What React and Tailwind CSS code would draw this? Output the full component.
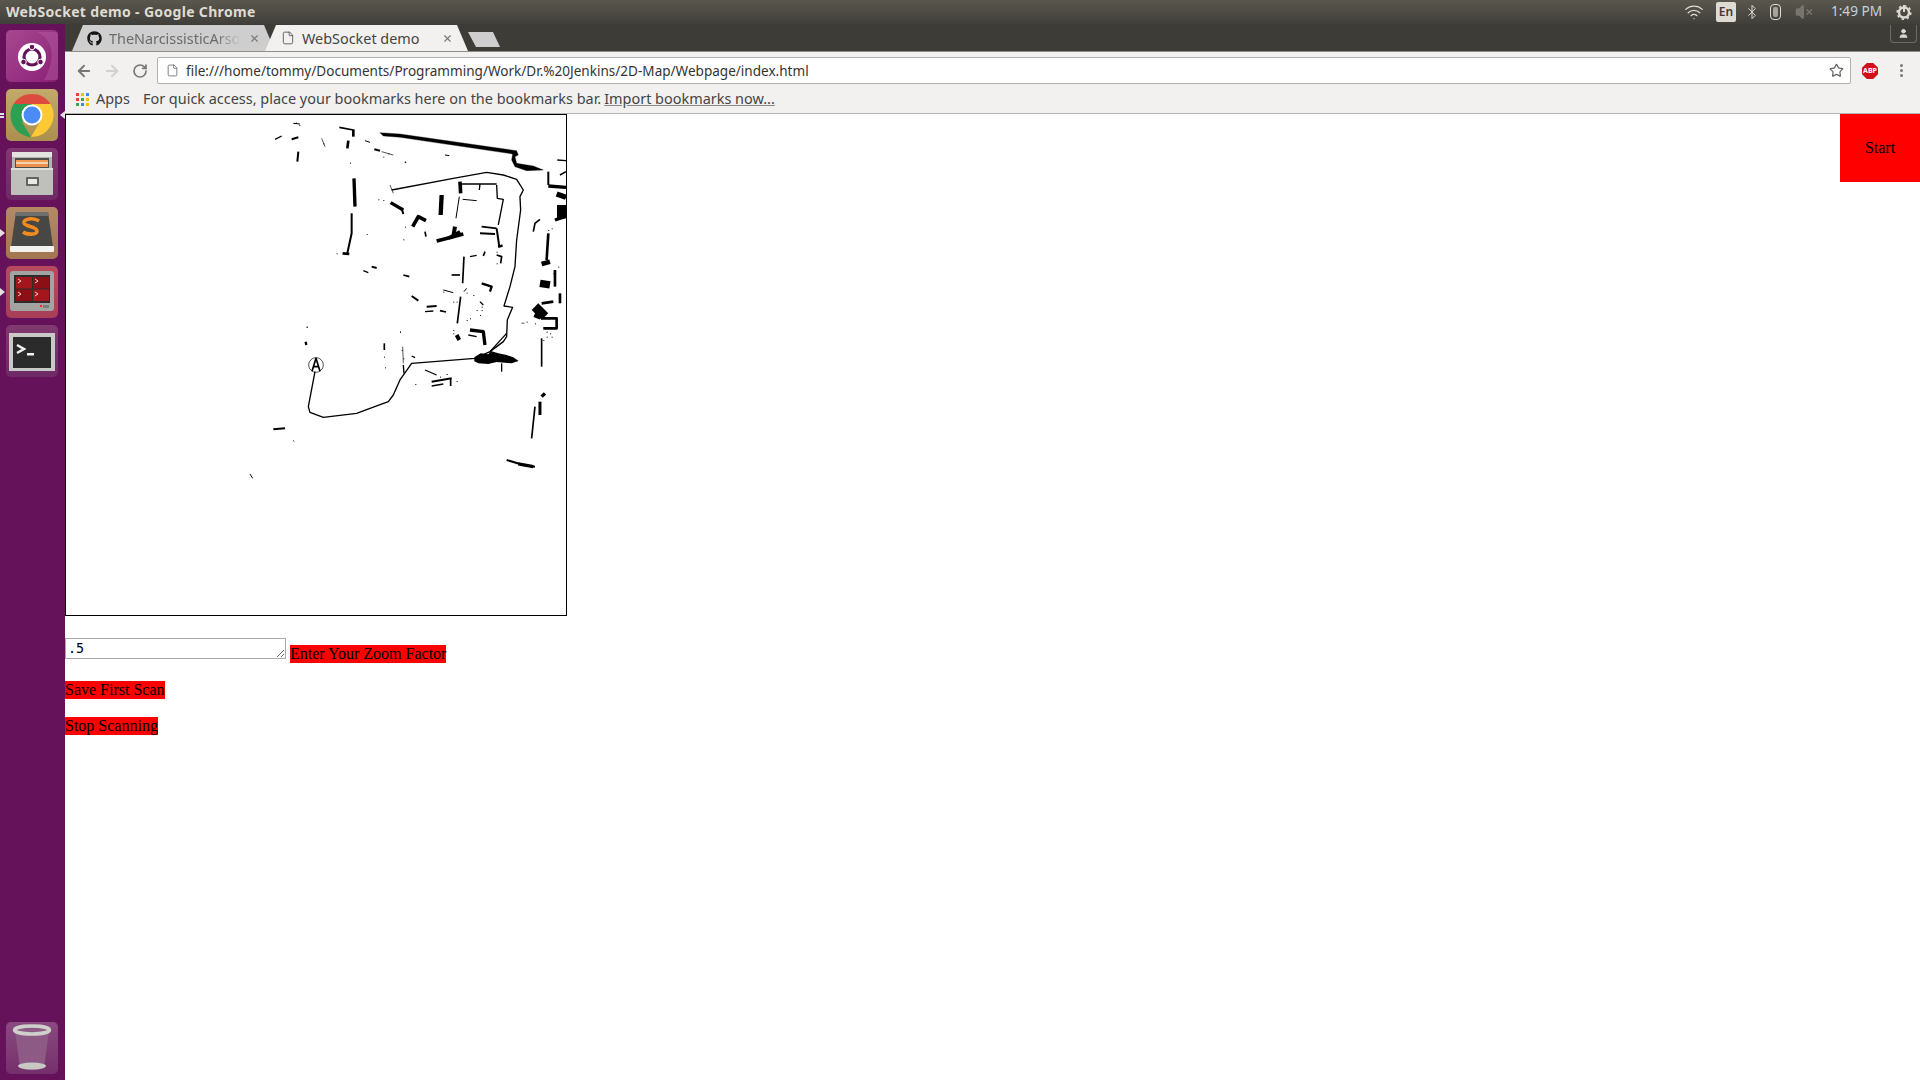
import { ArrowLeft, ArrowRight, Bluetooth, File, RotateCw, Star, User, VolumeX, Wifi, X } from 'lucide-react'
import { FaGithub } from 'react-icons/fa'

// strokes read off the map, in 3x crop coordinates: [path, width]
const upperMap = [
    ['M105,88 L125,78', 4], ['M155,88 L175,82', 6], ['M160,40 L180,42', 3], ['M175,125 L172,155', 6],
    ['M245,85 L255,110', 2], ['M298,52 L340,60', 5], ['M340,58 L340,80', 8], ['M325,92 L322,115', 8],
    ['M375,92 L390,97', 3], ['M403,118 L420,122', 6], ['M425,125 L460,135', 2], ['M495,155 L498,158', 4],
    ['M615,135 L628,137', 3], ['M952,150 L978,152', 4], ['M925,185 L925,225', 6], ['M925,228 L978,232', 10],
    ['M960,195 L978,185', 5], ['M950,252 L978,262', 16], ['M965,285 L965,325', 28], ['M945,330 L975,320', 10],
    ['M342,205 L345,290', 10], ['M335,310 L335,370 L322,430', 6], ['M308,430 L328,432', 8],
    ['M452,278 L490,300', 10], ['M485,295 L490,312', 6], ['M518,350 L535,320 L558,332', 11], ['M605,255 L602,315', 13],
    ['M660,215 L662,250', 11], ['M665,222 L770,222', 4], ['M720,222 L718,240', 4],
    ['M770,225 L772,265 L790,268 L775,345', 4], ['M658,260 L648,325', 3], ['M668,268 L710,272', 3],
    ['M725,350 L770,355', 5], ['M720,370 L765,372', 6], ['M770,355 L778,410', 6], ['M780,405 L782,412', 14],
    ['M590,393 L640,380 L670,372', 11], ['M645,350 L640,380', 12], ['M625,385 L660,365', 10], ['M555,365 L558,380', 5],
    ['M690,440 L710,436', 4], ['M672,440 L668,520', 5], ['M635,495 L660,495', 5], ['M735,425 L730,438', 5],
    ['M770,435 L785,440 L782,460', 5], ['M880,365 L885,340 L900,328', 5], ['M925,370 L920,450', 8],
    ['M905,462 L930,455', 14], ['M900,520 L930,525', 22], ['M945,480 L945,530', 8], ['M960,550 L960,580', 8],
    ['M885,590 L915,620', 28], ['M890,625 L900,600', 20], ['M905,580 L940,575', 8], ['M905,625 L950,625 L950,655 L910,655', 8],
    ['M370,482 L385,488', 4], ['M395,470 L410,474', 6], ['M490,495 L508,500', 5], ['M515,558 L535,572', 6],
    ['M560,590 L590,588', 6], ['M555,605 L580,603', 4], ['M600,602 L618,606', 5], ['M662,560 L652,640', 5],
    ['M610,540 L640,548', 3], ['M680,535 L672,545', 3], ['M725,520 L755,530 L750,545', 7], ['M720,575 L730,585', 4],
    ['M690,660 L730,665 L735,705', 10], ['M650,675 L658,690', 12], ['M685,675 L710,680', 4], ['M433,700 L433,720', 5],
    ['M455,240 L640,205 L740,187 L790,195 L830,208 L850,240 L840,260 L842,300 L830,390 L825,470 L810,530 L792,588 L818,592 L802,630 L800,680 L790,695 L750,725', 4],
    ['M450,225 L460,250', 2],
]

const lowerMap = [
    ['M488,140 L490,190', 2], ['M515,168 L525,173', 4], ['M490,195 L492,220', 4], ['M555,210 L590,225', 4],
    ['M575,245 L635,235', 6], ['M575,258 L610,252', 4], ['M632,235 L632,258', 5],
    ['M785,190 L785,215', 4], ['M905,115 L905,200', 5],
    ['M905,290 L915,280', 10], ['M900,305 L900,345', 9], ['M885,320 L875,415', 5], ['M800,480 L850,495 L885,500', 6],
    ['M835,492 L880,500', 10], ['M100,388 L135,385', 6], ['M160,422 L163,424', 3], ['M30,522 L38,535', 3], ['M197,125 L199,135', 7],
    ['M750,155 L705,175 L515,190 L480,240 L460,285 L445,305 L390,325 L350,340 L250,352 L210,337 L205,320 L225,215', 4],
    ['M800,100 L750,155', 4],
]

// loose single points of scan noise
const upperDots = [[168, 38], [178, 45], [250, 100], [330, 158], [380, 372], [495, 350], [290, 430], [415, 268], [430, 270], [490, 388], [430, 140], [445, 130], [610, 545], [700, 555], [725, 590], [710, 600], [720, 615], [690, 625], [650, 575], [640, 575], [845, 638], [860, 635], [200, 650], [480, 665], [770, 460], [780, 455], [680, 548], [640, 660], [925, 360], [935, 355], [955, 470], [940, 490], [920, 680], [930, 670], [910, 690], [770, 425]]
const lowerDots = [[200, 80], [480, 95], [432, 170], [435, 202], [485, 150], [490, 175], [600, 230], [650, 243], [640, 100], [680, 60], [725, 30], [850, 68], [885, 70], [935, 110], [920, 95], [620, 222], [526, 252]]

const MapDrawing = () => (
    <svg viewBox="66 115 500 500" className="block h-[500px] w-[500px]">
        <g fill="none" stroke="#000" strokeLinejoin="round" transform="translate(240 110) scale(0.3333)">
            <path d="M420,68 L480,72 L830,122 L835,135 L825,140 L830,160 L880,168 L910,180 L860,182 L825,170 L815,150 L818,132 L480,82 L430,78 Z" fill="#000" />
            {upperMap.map(([d, width], index) => (
                <path key={index} d={d} strokeWidth={width} />
            ))}
            {upperDots.map(([x, y], index) => (
                <rect key={index} x={x} y={y} width="3" height="3" fill="#000" stroke="none" />
            ))}
        </g>
        <g fill="none" stroke="#000" strokeLinejoin="round" transform="translate(240 300) scale(0.3333)">
            <path d="M703,172 L722,160 L745,163 L752,153 L775,160 L800,165 L820,172 L836,183 L815,190 L795,188 L770,186 L745,192 L715,190 L703,184 Z" fill="#000" stroke="none" />
            {lowerMap.map(([d, width], index) => (
                <path key={index} d={d} strokeWidth={width} />
            ))}
            {lowerDots.map(([x, y], index) => (
                <rect key={index} x={x} y={y} width="3" height="3" fill="#000" stroke="none" />
            ))}
            <circle cx="228" cy="195" r="22" strokeWidth="2" />
            <path d="M216,214 L228,175 L240,214 M220,200 L236,200" strokeWidth="5" />
        </g>
    </svg>
)

const Tile = ({ className, children }) => (
    <div className={`h-[52px] w-[52px] shrink-0 overflow-hidden rounded-[5px] ${className}`}>
        <svg viewBox="0 0 52 52" className="h-full w-full">
            {children}
        </svg>
    </div>
)

const Launcher = () => (
    <div className="relative flex w-[65px] shrink-0 flex-col items-center gap-[7px] bg-[#66125a] pt-[6px] pr-[1px] pb-[6px]">
        <Tile className="bg-gradient-to-br from-[#a8488f] to-[#8a1d78]">
            <path d="M30,2 C48,8 50,30 38,50 L52,50 L52,2 Z" fill="#b05a9c" opacity="0.5" />
            <circle cx="26" cy="27" r="14" fill="#fff" />
            <circle cx="26" cy="27" r="8" fill="none" stroke="#66125a" strokeWidth="3.2" />
            <circle cx="26" cy="17" r="2.8" fill="#66125a" stroke="#fff" />
            <circle cx="17.5" cy="32" r="2.8" fill="#66125a" stroke="#fff" />
            <circle cx="34.5" cy="32" r="2.8" fill="#66125a" stroke="#fff" />
        </Tile>
        <Tile className="bg-gradient-to-b from-[#c3aa6a] to-[#ab8f4f]">
            <path d="M7.5,15 A22,22 0 0 1 44.5,15 L26,15 Z" fill="#dd4b3e" />
            <path d="M7.5,15 L26,15 L16,33 L25,48 A22,22 0 0 1 7.5,15 Z" fill="#2e9e52" />
            <path d="M26,15 L44.5,15 A22,22 0 0 1 25,48 L35,31 Z" fill="#fcc934" />
            <circle cx="26" cy="26" r="10.5" fill="#fff" />
            <circle cx="26" cy="26" r="8.5" fill="#4b8bf5" />
        </Tile>
        <Tile className="bg-gradient-to-b from-[#81396f] to-[#6e2a66]">
            <rect x="6" y="4" width="40" height="42" rx="2" fill="#b4b4b0" />
            <rect x="6" y="4" width="40" height="5" fill="#e3e3df" />
            <rect x="9" y="10" width="34" height="11" fill="#4d4d4b" />
            <rect x="10" y="12" width="32" height="2" fill="#f29a56" />
            <rect x="10" y="14" width="32" height="2" fill="#f6d3b0" />
            <rect x="10" y="16" width="32" height="3" fill="#ee8f4c" />
            <rect x="5" y="20" width="42" height="27" rx="1" fill="#bfbfbb" />
            <rect x="5" y="20" width="42" height="2" fill="#dededa" />
            <rect x="20" y="29" width="13" height="9" rx="1" fill="#63635e" />
            <rect x="22" y="31" width="9" height="5" fill="#e8e8e6" />
        </Tile>
        <Tile className="bg-gradient-to-b from-[#b48a66] to-[#a37652]">
            <path d="M10,5 H42 L47,40 H5 Z" fill="#474745" />
            <path d="M10,5 H42 L43,9 H9 Z" fill="#6f6f6d" />
            <rect x="4" y="39" width="44" height="6" rx="1" fill="#f1f1ee" />
            <path d="M33,14 C27,10 17,12 18,16 C19,20 31,19 31,24 C31,28 21,28 17,25" fill="none" stroke="#f28b1e" strokeWidth="3.6" />
        </Tile>
        <Tile className="bg-gradient-to-b from-[#b84a5f] to-[#a83e58]">
            <rect x="4" y="5" width="44" height="40" rx="3" fill="#a3a3a1" />
            <rect x="8" y="9" width="36" height="28" fill="#2c2c2c" />
            <rect x="10" y="11" width="16" height="11.5" fill="#a3161b" />
            <rect x="27" y="11" width="16" height="11.5" fill="#8b0f14" />
            <rect x="10" y="23.5" width="16" height="11.5" fill="#8b0f14" />
            <rect x="27" y="23.5" width="16" height="11.5" fill="#a3161b" />
            <path d="M12,13 L15,15 L12,17 M29,13 L32,15 L29,17 M12,26 L15,28 L12,30 M29,26 L32,28 L29,30" fill="none" stroke="#fff" strokeWidth="0.8" />
            <rect x="37" y="39" width="6" height="3" fill="#7c7c7a" />
            <rect x="34" y="39" width="2" height="2" fill="#e0302a" />
        </Tile>
        <Tile className="bg-gradient-to-b from-[#81396f] to-[#6e2a66]">
            <rect x="3" y="8" width="46" height="38" fill="#c9c9c7" />
            <rect x="7" y="12" width="38" height="31" fill="#2b2b2b" />
            <path d="M11,20 L18,24 L11,28" fill="none" stroke="#f2f2f2" strokeWidth="2.5" />
            <rect x="21" y="28" width="7" height="2.5" fill="#f2f2f2" />
        </Tile>
        <div className="mt-auto">
            <Tile className="bg-gradient-to-b from-[#8a4a80] to-[#75306b]">
                <path d="M9,9 L14,46 C20,49 32,49 38,46 L43,9 Z" fill="#8d5a86" />
                <ellipse cx="26" cy="44" rx="14" ry="3.5" fill="#c8c8c4" />
                <ellipse cx="26" cy="8" rx="17.5" ry="4" fill="#8d5a86" stroke="#cfcfcb" strokeWidth="3.5" />
            </Tile>
        </div>
        {/* running-app pips on the launcher edges */}
        <div className="absolute top-[89px] left-0 flex flex-col gap-[1px]">
            <div className="h-[2px] w-[4px] bg-[#e6e0e4]" />
            <div className="h-[2px] w-[4px] bg-[#e6e0e4]" />
        </div>
        <div className="absolute top-[87px] right-0 h-0 w-0 border-y-[4px] border-r-[5px] border-y-transparent border-r-[#e6e0e4]" />
        <div className="absolute top-[205px] left-0 h-0 w-0 border-y-[4px] border-l-[5px] border-y-transparent border-l-[#e6e0e4]" />
        <div className="absolute top-[264px] left-0 h-0 w-0 border-y-[4px] border-l-[5px] border-y-transparent border-l-[#e6e0e4]" />
    </div>
)

const TopPanel = () => (
    <div className="flex h-6 shrink-0 items-center justify-between bg-gradient-to-b from-[#5a574e] to-[#403f3a] pr-[8px] pl-[6px]">
        <span className="-mt-[1px] text-[14px] font-bold tracking-[0.33px] text-[#dfdbd2]">WebSocket demo - Google Chrome</span>
        <div className="flex items-center">
            <Wifi className="h-5 w-5 text-[#dcdad4]" strokeWidth={1.5} />
            <div className="ml-[12px] flex h-5 w-5 items-center justify-center rounded-[2px] bg-[#dfdbd2] text-[12px] font-semibold text-[#3c3b37]">En</div>
            <Bluetooth className="ml-[8px] h-4 w-4 text-[#dcdad4]" strokeWidth={1.5} />
            <div className="ml-[10px] flex h-[16px] w-[11px] justify-center rounded-[4px] border border-[#dcdad4] pt-[2px]">
                <div className="h-[10px] w-[5px] rounded-[2px] bg-[#a5a39c]" />
            </div>
            <VolumeX className="ml-[14px] h-[18px] w-[18px] fill-[#77756e] text-[#77756e]" strokeWidth={2} />
            <span className="ml-[18px] -mt-[1px] text-[13.6px] text-[#c3d1de]">1:49 PM</span>
            <svg viewBox="0 0 16 16" className="ml-[14px] h-4 w-4">
                <circle cx="8" cy="8.5" r="5" fill="none" stroke="#dfdbd2" strokeWidth="2.4" />
                <circle cx="8" cy="8.5" r="6.8" fill="none" stroke="#dfdbd2" strokeWidth="1.6" strokeDasharray="2.5 2.8" />
                <path d="M8,1 V8" stroke="#dfdbd2" strokeWidth="2" />
            </svg>
        </div>
    </div>
)

const TabStrip = () => (
    <div className="flex h-7 shrink-0 items-end justify-between border-b border-[#8f8e8a] bg-[#3d3c37] pl-[7px]">
        <div className="flex h-[26px] items-end">
            <div className="flex h-full w-[203px] items-center bg-[#cfcece] pr-[15px] pl-[15px] [clip-path:polygon(0_100%,11px_0,192px_0,203px_100%)]">
                <FaGithub className="h-[15px] w-[15px] shrink-0 text-[#161514]" />
                <span className="mt-[1px] ml-[7px] text-[14.4px] whitespace-nowrap text-[#6b6b6b] [mask-image:linear-gradient(to_right,#000_82%,transparent)]">TheNarcissisticArso</span>
                <X className="ml-auto h-[11px] w-[11px] shrink-0 text-[#777]" strokeWidth={2.5} />
            </div>
            <div className="-ml-[10px] flex h-full w-[203px] items-center bg-[#f2f1f0] pr-[15px] pl-[16px] [clip-path:polygon(0_100%,11px_0,192px_0,203px_100%)]">
                <File className="h-[14px] w-[14px] shrink-0 text-[#555]" strokeWidth={1.5} />
                <span className="mt-[1px] ml-[7px] text-[14.4px] whitespace-nowrap text-[#444]">WebSocket demo</span>
                <X className="ml-auto h-[11px] w-[11px] shrink-0 text-[#777]" strokeWidth={2.5} />
            </div>
            <div className="mb-[4px] h-[15px] w-[32px] bg-[#cfcece] [clip-path:polygon(0_0,25px_0,32px_100%,8px_100%)]" />
        </div>
        <div className="mr-[3px] mb-[8px] flex h-[18px] w-[27px] items-center justify-center rounded-b-[4px] border border-t-0 border-[#6d6c67]">
            <User className="h-[11px] w-[11px] fill-[#dfdbd2] text-[#dfdbd2]" />
        </div>
    </div>
)

const Toolbar = () => (
    <div className="flex h-[33px] shrink-0 items-start bg-[#f2f1f0] pt-[5px] pl-[10px]">
        <ArrowLeft className="mt-[5px] h-[18px] w-[18px] text-[#777]" strokeWidth={2.5} />
        <ArrowRight className="mt-[5px] ml-[10px] h-[18px] w-[18px] text-[#d0d0d0]" strokeWidth={2.5} />
        <RotateCw className="mt-[6px] ml-[11px] h-[16px] w-[16px] text-[#777]" strokeWidth={2.5} />
        <div className="ml-[9px] flex h-[27px] flex-1 items-center rounded-[2px] border border-[#b0b0b0] bg-white pr-[6px] pl-[8px]">
            <File className="h-[13px] w-[13px] shrink-0 text-[#666]" strokeWidth={1.5} />
            <span className="mt-[1px] ml-[7px] text-[13.55px] whitespace-nowrap text-[#333]">file:///home/tommy/Documents/Programming/Work/Dr.%20Jenkins/2D-Map/Webpage/index.html</span>
            <Star className="ml-auto h-[15px] w-[15px] text-[#666]" strokeWidth={2} />
        </div>
        <div className="mt-[6px] ml-[11px] flex h-4 w-4 items-center justify-center bg-[#d0101a] text-[7px] font-bold text-white [clip-path:polygon(30%_0,70%_0,100%_30%,100%_70%,70%_100%,30%_100%,0_70%,0_30%)]">ABP</div>
        <div className="mt-[7px] mr-[17px] ml-[22px] flex flex-col gap-[2px]">
            <div className="h-[3px] w-[3px] rounded-full bg-[#777]" />
            <div className="h-[3px] w-[3px] rounded-full bg-[#777]" />
            <div className="h-[3px] w-[3px] rounded-full bg-[#777]" />
        </div>
    </div>
)

const appColors = ['#ea4335', '#fbbc05', '#4285f4', '#ea4335', '#34a853', '#fbbc05', '#34a853', '#4285f4', '#fbbc05']

const BookmarksBar = () => (
    <div className="flex h-[29px] shrink-0 items-center border-b border-[#b4b4b4] bg-[#f2f1f0] pl-[11px] text-[14.45px] whitespace-nowrap text-[#444]">
        <div className="grid h-[13px] w-[13px] grid-cols-3 gap-[2px]">
            {appColors.map((color, index) => (
                <div key={index} className="h-[3px] w-[3px]" style={{ backgroundColor: color }} />
            ))}
        </div>
        <span className="ml-[7px]">Apps</span>
        <span className="ml-[13px]">For quick access, place your bookmarks here on the bookmarks bar.</span>
        <span className="ml-[3px] underline decoration-[#888]">Import bookmarks now...</span>
    </div>
)

const Page = () => (
    <div className="flex min-h-0 flex-1 items-start justify-between bg-white font-['Liberation_Serif',serif] text-[16px] leading-[18px] text-black">
        <div className="flex flex-col items-start">
            <div className="border border-black">
                <MapDrawing />
            </div>
            <div className="mt-[22px] flex items-start gap-[4px]">
                <textarea
                    defaultValue=".5"
                    className="h-[21px] w-[221px] border border-[#a9a9a9] px-[2px] pt-[2px] font-['DejaVu_Sans_Mono',monospace] text-[13.33px] leading-[15px] outline-none"
                />
                <span className="mt-[7px] bg-[#ff0000]">Enter Your Zoom Factor</span>
            </div>
            <div className="mt-[18px] flex flex-col items-start gap-[18px]">
                <span className="bg-[#ff0000]">Save First Scan</span>
                <span className="bg-[#ff0000]">Stop Scanning</span>
            </div>
        </div>
        <div className="flex h-[68px] w-20 items-center justify-center bg-[#ff0000]">Start</div>
    </div>
)

const App = () => {
    return (
        <div className="flex h-screen w-full flex-col overflow-hidden font-['Noto_Sans',sans-serif]">
            <TopPanel />
            <div className="flex min-h-0 flex-1">
                <Launcher />
                <div className="flex min-w-0 flex-1 flex-col">
                    <TabStrip />
                    <Toolbar />
                    <BookmarksBar />
                    <Page />
                </div>
            </div>
        </div>
    )
}

export default App
